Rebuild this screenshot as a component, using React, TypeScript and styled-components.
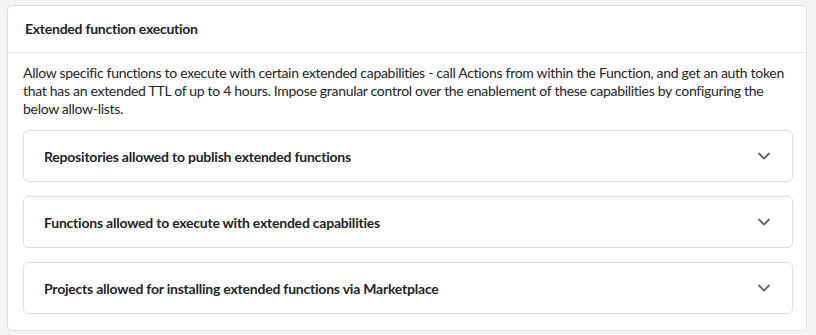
import React from "react";
import styled, { createGlobalStyle } from "styled-components";
import { ChevronDown } from "lucide-react";

const Global = createGlobalStyle`
  html, body { margin: 0; padding: 0; background: #f3f4f6; }
  body { font-family: Lato, "Liberation Sans", sans-serif; color: #212529; }
  * { box-sizing: border-box; }
`;

const Page = styled.div`
  padding: 5px 9px 5px 7px;
`;

const Card = styled.section`
  background: #fff;
  border: 1px solid #dcdee2;
  border-radius: 5px;
`;

const CardHeader = styled.header`
  padding: 14px 16px 14px 17px;
  border-bottom: 1px solid #e4e6e9;
  font-size: 14px;
  line-height: 18px;
  font-weight: 700;
  letter-spacing: -0.25px;
  color: #1f2328;
`;

const CardBody = styled.div`
  padding: 11px 13px 16px 15px;
  display: flex;
  flex-direction: column;
  gap: 14px;
`;

const Description = styled.p`
  margin: 0 0 -2px 0;
  font-size: 14px;
  line-height: 18px;
  letter-spacing: -0.3px;
  color: #212529;
`;

const Item = styled.div`
  height: 52px;
  border: 1px solid #dcdee2;
  border-radius: 5px;
  display: flex;
  align-items: center;
  justify-content: space-between;
  padding: 0 18px 0 20px;
`;

const ItemTitle = styled.span`
  font-size: 14px;
  font-weight: 700;
  letter-spacing: -0.22px;
  color: #1f2328;
`;

const Chevron = styled(ChevronDown)`
  color: #5f6775;
`;

const items = [
  "Repositories allowed to publish extended functions",
  "Functions allowed to execute with extended capabilities",
  "Projects allowed for installing extended functions via Marketplace",
];

export default function App() {
  return (
    <>
      <Global />
      <Page>
        <Card>
          <CardHeader>Extended function execution</CardHeader>
          <CardBody>
            <Description>
              Allow specific functions to execute with certain extended capabilities - call Actions from within the
              Function, and get an auth token that has an extended TTL of up to 4 hours. Impose granular control over
              the enablement of these capabilities by configuring the below allow-lists.
            </Description>
            {items.map((t) => (
              <Item key={t}>
                <ItemTitle>{t}</ItemTitle>
                <Chevron size={20} strokeWidth={2.2} />
              </Item>
            ))}
          </CardBody>
        </Card>
      </Page>
    </>
  );
}
